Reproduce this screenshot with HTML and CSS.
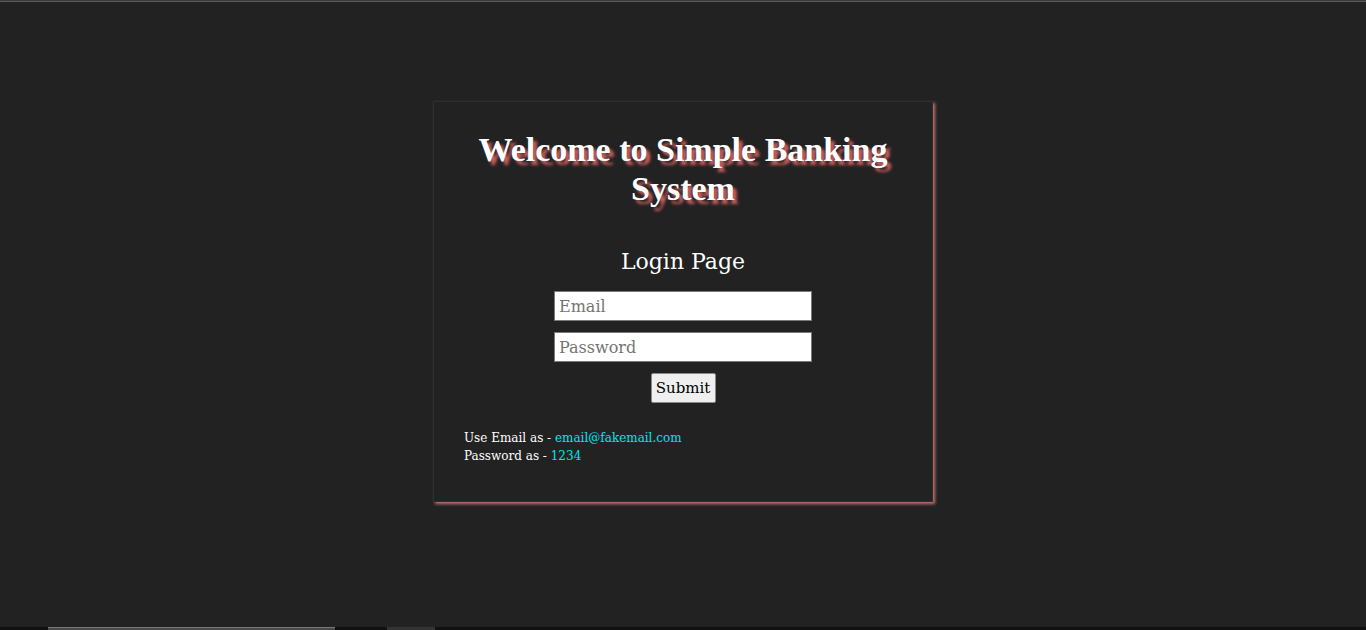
FILE: index.html
```html
<!DOCTYPE html>
<html>
<head>
<meta charset="utf-8">
<link rel="stylesheet" href="styles.css">
</head>
<body>
<div class="topline"></div>
<main class="stage">
  <section class="card">
    <h1 class="title">Welcome to Simple Banking System</h1>
    <h2 class="subtitle">Login Page</h2>
    <form class="form">
      <input class="field" type="text" placeholder="Email">
      <input class="field" type="password" placeholder="Password">
      <button class="submit" type="button">Submit</button>
    </form>
    <div class="hint">
      <div>Use Email as - <span class="accent">email@fakemail.com</span></div>
      <div>Password as - <span class="accent">1234</span></div>
    </div>
  </section>
</main>
<div class="bottombar">
  <div class="thumb thumb-a"></div>
  <div class="thumb thumb-b"></div>
</div>
</body>
</html>
```
FILE: styles.css
```css
html, body {
  margin: 0;
  padding: 0;
  height: 630px;
  overflow: hidden;
  background: #222222;
}
body {
  display: flex;
  flex-direction: column;
  font-family: "Liberation Serif", serif;
}
.topline {
  height: 2px;
  background: #5b5b5b;
  border-top: 1px solid #3a3a3a;
  box-sizing: border-box;
}
.stage {
  flex: 1;
  display: flex;
  justify-content: center;
  align-items: flex-start;
  padding-top: 99px;
}
.card {
  width: 500px;
  height: 401px;
  box-sizing: border-box;
  border: 1px solid #2e2e2e;
  box-shadow: 2px 2px 3px #c27272;
  display: flex;
  flex-direction: column;
  align-items: center;
  padding: 28px 30px 0;
}
.title {
  margin: 0;
  width: 430px;
  text-align: center;
  color: #ffffff;
  font-family: "Liberation Serif", serif;
  font-weight: bold;
  font-size: 34px;
  line-height: 39px;
  text-shadow: 4px 4px 3px #c85e5e;
}
.subtitle {
  margin: 40px 0 0;
  color: #ffffff;
  font-family: "DejaVu Serif", serif;
  font-weight: normal;
  font-size: 22px;
  line-height: 28px;
}
.form {
  margin-top: 15px;
  display: flex;
  flex-direction: column;
  align-items: center;
  gap: 11px;
}
.field {
  width: 258px;
  height: 30px;
  box-sizing: border-box;
  border: 1px solid #7a7a7a;
  background: #ffffff;
  padding: 0 4px;
  font-family: "DejaVu Serif", serif;
  font-size: 16px;
  color: #222;
}
.field::placeholder {
  color: #757575;
}
.submit {
  width: 65px;
  height: 30px;
  box-sizing: border-box;
  border: 1px solid #8a8a8a;
  border-radius: 2px;
  background: #efefef;
  font-family: "DejaVu Serif", serif;
  font-size: 15px;
  color: #000;
  padding: 0;
}
.hint {
  align-self: stretch;
  margin-top: 26px;
  padding-left: 0;
  color: #ffffff;
  font-family: "DejaVu Serif", serif;
  font-size: 12px;
  line-height: 18px;
}
.accent {
  color: #00e5f0;
}
.bottombar {
  height: 3px;
  background: #111111;
  display: flex;
}
.thumb {
  height: 3px;
}
.thumb-a {
  margin-left: 48px;
  width: 287px;
  background: #484848;
  box-shadow: inset 0 1px 0 #777;
}
.thumb-b {
  margin-left: 52px;
  width: 48px;
  background: #333333;
}
```
